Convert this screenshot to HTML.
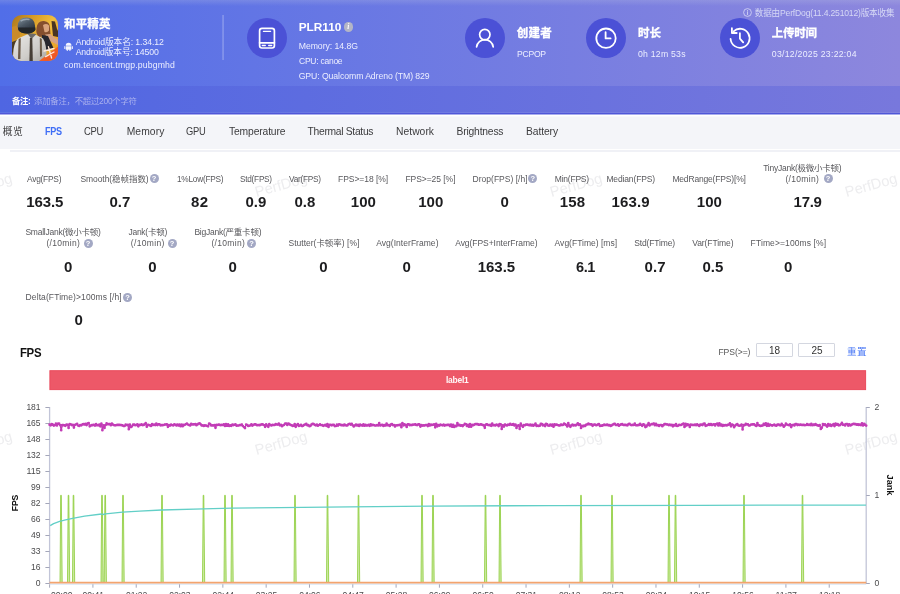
<!DOCTYPE html>
<html lang="zh-CN">
<head>
<meta charset="utf-8">
<title>PerfDog - 和平精英 FPS</title>
<meta name="viewport" content="width=900">
<style>
*{box-sizing:border-box;margin:0;padding:0}
html,body{width:900px;height:594px;overflow:hidden;background:#fff}
.hdr,.note,.tabs,.panel{will-change:transform}
body{font-family:"Liberation Sans", "Noto Sans CJK SC", sans-serif;position:relative;-webkit-font-smoothing:antialiased}
ul{list-style:none}
.t{position:absolute;white-space:nowrap;display:block}
.hb{-webkit-text-stroke:.3px #fff}
.abs{position:absolute;display:block}
.hdr{position:absolute;left:0;top:0;width:900px;height:86.4px;background:linear-gradient(90deg,#516ee8 0%,#8d87dd 100%)}
.hdr:before{content:"";position:absolute;left:0;top:0;width:900px;height:6px;background:linear-gradient(180deg,rgba(190,196,226,.24),rgba(190,196,226,0))}
.appicon{position:absolute;left:11.7px;top:14.7px;width:46px;height:46px}
.appicon svg{display:block}
.vsep{position:absolute;left:222px;top:15px;width:2px;height:45px;background:linear-gradient(90deg,rgba(255,255,255,.08),rgba(255,255,255,.28) 50%,rgba(255,255,255,.14))}
.circ{position:absolute;width:40px;height:40px;border-radius:50%;background:#4b51d6}
.circ svg{display:block}
.info{position:absolute;left:343.8px;top:22.4px;width:9.2px;height:9.2px;border-radius:50%;background:#b3b5c6}
.note{position:absolute;left:0;top:86px;width:900px;height:29px;background:linear-gradient(90deg,#4f66e2 0%,#7878dc 100%)}
.note:after{content:"";position:absolute;left:0;top:26px;width:900px;height:3px;background:linear-gradient(180deg,rgba(255,255,255,.08) 0,rgba(255,255,255,.08) 1px,#4f57d8 1px,#4f57d8 2px,#a9adec 2px,#a9adec 3px)}
.tabs{position:absolute;left:0;top:115px;width:900px;height:33.7px;background:linear-gradient(180deg,#fff 0,#fff 1px,#f9f9fc 1px,#f9f9fc 2px,#f4f5f9 2px);border-top:0 solid #fff;padding-top:2px}
.panel{position:absolute;left:0;top:150px;width:900px;height:444px;background:#fff;overflow:hidden}
.panel:before{content:"";position:absolute;left:9.5px;top:0.2px;width:891px;height:1.5px;background:#f0f1f6}
.q{position:absolute;width:9px;height:9px;border-radius:50%;background:#a3a8c4;display:block}
.inp{position:absolute;display:block;width:37.4px;height:14.4px;border:1px solid #d4d7e0;border-radius:1px;background:#fff}
.lbar{position:absolute;left:49.5px;top:220.2px;width:816.6px;height:20px}
.wm{position:absolute;width:80px;text-align:center;font-size:14.6px;line-height:20px;color:#ededef;transform:rotate(-15.5deg);white-space:nowrap}
</style>
</head>
<body>
<header class="hdr">
<div class="appicon"><svg viewBox="0 0 46 46" width="46" height="46">
<defs>
<linearGradient id="sky" x1="0" y1="0" x2="1" y2=".6"><stop offset="0" stop-color="#a8761f"/><stop offset=".35" stop-color="#d79a26"/><stop offset=".7" stop-color="#f0bd3c"/><stop offset="1" stop-color="#eaa52c"/></linearGradient>
<linearGradient id="shirt" x1="0" y1="0" x2="1" y2="1"><stop offset="0" stop-color="#e9e8e6"/><stop offset=".6" stop-color="#cfcdca"/><stop offset="1" stop-color="#a9a6a2"/></linearGradient>
<linearGradient id="helm" x1="0" y1="0" x2=".6" y2="1"><stop offset="0" stop-color="#8795a1"/><stop offset=".5" stop-color="#4a5662"/><stop offset="1" stop-color="#262c34"/></linearGradient>
<linearGradient id="cor" x1="0" y1="0" x2="1" y2="1"><stop offset="0" stop-color="#f47a2a"/><stop offset="1" stop-color="#ee4a26"/></linearGradient>
<clipPath id="ic"><rect width="46" height="46" rx="9.6" ry="9.6"/></clipPath>
<filter id="sf" x="-5%" y="-5%" width="110%" height="110%"><feGaussianBlur stdDeviation=".55"/></filter>
</defs>
<g clip-path="url(#ic)">
<rect width="46" height="46" fill="url(#sky)"/>
<g filter="url(#sf)">
<path d="M0 12 L7 10 L8 22 L0 26Z" fill="#c98a2a"/>
<path d="M0 27 L5 25 L6 46 L0 46Z" fill="#4b3b26"/>
<path d="M39.5 6 L43 6.5 L45 14 L46 16 L46 22 L41 21Z" fill="#4a3524"/>
<path d="M24.5 13 Q25.5 5.5 32 6 Q38 6.5 38 13 L38.5 19 L34 21 L27 22 Q23.5 19 24.5 13Z" fill="#85502f"/>
<path d="M31 10 Q34.5 8 37 10.5 L37 15.5 Q35.5 18 32.5 17Z" fill="#d9a47e"/>
<path d="M33 19.5 L38 19 L46 25 L46 30 L38 26Z" fill="#d6a283"/>
<path d="M30 20 L36 21 L41.5 33 L34 36 L29 28Z" fill="#27272d"/>
<path d="M1 46 Q0.5 27 7 23 L15 19.5 L24 20 L31 23.5 Q35 29 34.5 46Z" fill="url(#shirt)"/>
<path d="M15 18 L19.5 24 L24.5 19Z" fill="#6d6b68"/>
<path d="M17.9 23 L20.3 23 L20.8 46 L17.4 46Z" fill="#453c34"/>
<path d="M6.6 24 L8.8 23 L8.4 44 L6 44Z" fill="#6b5a48"/>
<path d="M27.8 22.8 L29.8 24 L30 41 L28 42Z" fill="#6b5a48"/>
<path d="M5.6 11.5 Q6 2.4 14.5 2.4 Q22.4 2.4 23 10.5 L23.4 14.5 Q21.5 18.6 15 18.6 Q8.5 18.6 6.4 15Z" fill="url(#helm)"/>
<path d="M6 12.5 L23.2 12.5 L23.4 15 Q21 18.4 15 18.4 Q8.6 18.4 6.4 15Z" fill="#20252c"/>
<path d="M8.6 6 Q12.5 3.6 17.5 4.6" stroke="#a9b6bf" stroke-width="1.5" fill="none" opacity=".75"/>
<path d="M46 31.5 L46 46 L27 46Z" fill="url(#cor)"/>
<path d="M32 36 L42 33.5 M36.4 31.6 L39.6 43 M33.6 41.6 L42 37" stroke="#ffe9da" stroke-width="1.3" stroke-linecap="round"/>
</g>
</g></svg></div>
<span class="t hb" id="t1" style="left:64.00px;top:16.37px;font-size:11.5px;line-height:16.1px;font-weight:700;color:#ffffff;letter-spacing:0.167px;">和平精英</span>
<svg class="abs" style="left:63.8px;top:42.2px" width="9.2" height="9.2" viewBox="0 0 9 9"><path d="M1.7 3.6 A2.8 2.8 0 0 1 7.3 3.6Z M1.7 4.1 H7.3 V7.2 Q7.3 7.7 6.8 7.7 H6.3 V8.6 Q6.3 9 5.8 9 Q5.3 9 5.3 8.6 V7.7 H3.7 V8.6 Q3.7 9 3.2 9 Q2.7 9 2.7 8.6 V7.7 H2.2 Q1.7 7.7 1.7 7.2Z M0.3 4.3 Q0.3 3.9 0.75 3.9 Q1.2 3.9 1.2 4.3 V6.5 Q1.2 6.9 0.75 6.9 Q0.3 6.9 0.3 6.5Z M7.8 4.3 Q7.8 3.9 8.25 3.9 Q8.7 3.9 8.7 4.3 V6.5 Q8.7 6.9 8.25 6.9 Q7.8 6.9 7.8 6.5Z" fill="#f2f3fd"/></svg>
<span class="t" id="t2" style="left:75.70px;top:36.10px;font-size:8.7px;line-height:12.18px;color:#eceeff;letter-spacing:-0.096px;">Android版本名: 1.34.12</span>
<span class="t" id="t3" style="left:75.70px;top:46.10px;font-size:8.7px;line-height:12.18px;color:#eceeff;letter-spacing:-0.119px;">Android版本号: 14500</span>
<span class="t" id="t4" style="left:64.00px;top:59.20px;font-size:8.7px;line-height:12.18px;color:#eceeff;letter-spacing:0.135px;">com.tencent.tmgp.pubgmhd</span>
<div class="vsep"></div>
<div class="circ" style="left:246.7px;top:17.5px"><svg width="40" height="40" viewBox="0 0 40 40" fill="none" stroke="#fff" stroke-width="1.7" stroke-linecap="round" stroke-linejoin="round"><rect x="12.6" y="10.4" width="14.8" height="19.6" rx="2.4"/><path d="M12.6 24.8 H27.4"/><path d="M16.4 13.3 H23.6" stroke-width="1.3"/><path d="M15.3 27.5 H18.3 M21.7 27.5 H24.7" stroke-width="1.3"/></svg></div>
<span class="t" id="t5" style="left:298.70px;top:18.95px;font-size:11.8px;line-height:16.52px;font-weight:700;color:#ffffff;letter-spacing:-0.008px;">PLR110</span>
<div class="info"><span class="t" style="left:0;top:0;width:9px;text-align:center;font-size:7.5px;line-height:9.4px;font-style:italic;font-weight:700;color:#fff;font-family:'Liberation Serif',serif">i</span></div>
<span class="t" id="t6" style="left:298.70px;top:40.10px;font-size:8.7px;line-height:12.18px;color:#eceeff;letter-spacing:-0.048px;">Memory: 14.8G</span>
<span class="t" id="t7" style="left:298.70px;top:55.10px;font-size:8.7px;line-height:12.18px;color:#eceeff;letter-spacing:-0.261px;transform:scaleX(0.9799);transform-origin:0 50%;">CPU: canoe</span>
<span class="t" id="t8" style="left:298.70px;top:70.10px;font-size:8.7px;line-height:12.18px;color:#eceeff;letter-spacing:-0.081px;">GPU: Qualcomm Adreno (TM) 829</span>
<div class="circ" style="left:465.2px;top:17.5px"><svg width="40" height="40" viewBox="0 0 40 40" fill="none" stroke="#fff" stroke-width="1.7" stroke-linecap="round" stroke-linejoin="round"><circle cx="19.8" cy="16.6" r="5.2"/><path d="M11.6 28.8 A8.4 8.4 0 0 1 28.2 28.8"/></svg></div>
<span class="t hb" id="t9" style="left:516.80px;top:25.27px;font-size:11.5px;line-height:16.1px;font-weight:700;color:#ffffff;letter-spacing:0.200px;">创建者</span>
<span class="t" id="t10" style="left:516.80px;top:47.50px;font-size:8.7px;line-height:12.18px;color:#eceeff;letter-spacing:-0.261px;transform:scaleX(0.9905);transform-origin:0 50%;">PCPOP</span>
<div class="circ" style="left:585.8px;top:17.5px"><svg width="40" height="40" viewBox="0 0 40 40" fill="none" stroke="#fff" stroke-width="1.7" stroke-linecap="round" stroke-linejoin="round"><circle cx="20" cy="20.2" r="9.7" stroke-width="1.8"/><path d="M19.6 14.2 V20.4 H24.6" stroke-width="1.8"/></svg></div>
<span class="t hb" id="t11" style="left:638.00px;top:25.27px;font-size:11.5px;line-height:16.1px;font-weight:700;color:#ffffff;letter-spacing:0.100px;">时长</span>
<span class="t" id="t12" style="left:638.00px;top:47.50px;font-size:8.7px;line-height:12.18px;color:#eceeff;letter-spacing:0.233px;">0h 12m 53s</span>
<div class="circ" style="left:720px;top:17.5px"><svg width="40" height="40" viewBox="0 0 40 40" fill="none" stroke="#fff" stroke-width="1.7" stroke-linecap="round" stroke-linejoin="round"><path d="M10.6 21 A9.5 9.5 0 1 0 13.6 13.3" stroke-width="1.8"/><path d="M11.9 10.2 V15 H16.7" stroke-width="1.8"/><path d="M19.9 15.2 V20.6 L23.2 24.4" stroke-width="1.8"/></svg></div>
<span class="t hb" id="t13" style="left:771.80px;top:25.27px;font-size:11.5px;line-height:16.1px;font-weight:700;color:#ffffff;letter-spacing:-0.233px;">上传时间</span>
<span class="t" id="t14" style="left:771.80px;top:47.50px;font-size:8.7px;line-height:12.18px;color:#eceeff;letter-spacing:0.277px;">03/12/2025 23:22:04</span>
<svg class="abs" style="left:742.6px;top:7.6px" width="9" height="9" viewBox="0 0 9 9" fill="none" stroke="#d9dbf6" stroke-width=".8"><circle cx="4.5" cy="4.5" r="3.9"/><path d="M4.5 4 V6.6 M4.5 2.5 V3" stroke-linecap="round"/></svg>
<span class="t" id="t15" style="left:754.80px;top:6.50px;font-size:8.6px;line-height:12.04px;color:#d6d8f5;letter-spacing:-0.187px;">数据由PerfDog(11.4.251012)版本收集</span>
</header>
<div class="note">
<span class="t" id="t16" style="left:11.60px;top:10.01px;font-size:8.4px;line-height:11.76px;font-weight:700;color:#ffffff;letter-spacing:-0.252px;transform:scaleX(0.9925);transform-origin:0 50%;">备注:</span>
<span class="t" id="t17" style="left:34.00px;top:10.01px;font-size:8.4px;line-height:11.76px;color:#a9b0ee;letter-spacing:-0.239px;">添加备注，不超过200个字符</span>
</div>
<nav class="tabs"><ul>
<li><span class="t" id="t18" style="left:2.80px;top:10.34px;font-size:9.8px;line-height:13.72px;color:#3c3c3e;letter-spacing:0.306px;">概览</span></li>
<li><span class="t on" id="t19" style="left:45.20px;top:10.22px;font-size:10.3px;line-height:14.42px;font-weight:700;color:#3f6ef6;letter-spacing:-0.309px;transform:scaleX(0.8808);transform-origin:0 50%;">FPS</span></li>
<li><span class="t" id="t20" style="left:84.40px;top:10.22px;font-size:10.3px;line-height:14.42px;color:#3c3c3e;letter-spacing:-0.309px;transform:scaleX(0.9180);transform-origin:0 50%;">CPU</span></li>
<li><span class="t" id="t21" style="left:126.70px;top:10.22px;font-size:10.3px;line-height:14.42px;color:#3c3c3e;letter-spacing:0.083px;">Memory</span></li>
<li><span class="t" id="t22" style="left:186.40px;top:10.22px;font-size:10.3px;line-height:14.42px;color:#3c3c3e;letter-spacing:-0.309px;transform:scaleX(0.9074);transform-origin:0 50%;">GPU</span></li>
<li><span class="t" id="t23" style="left:229.00px;top:10.22px;font-size:10.3px;line-height:14.42px;color:#3c3c3e;letter-spacing:-0.131px;">Temperature</span></li>
<li><span class="t" id="t24" style="left:307.60px;top:10.22px;font-size:10.3px;line-height:14.42px;color:#3c3c3e;letter-spacing:-0.302px;">Thermal Status</span></li>
<li><span class="t" id="t25" style="left:396.00px;top:10.22px;font-size:10.3px;line-height:14.42px;color:#3c3c3e;letter-spacing:0.039px;">Network</span></li>
<li><span class="t" id="t26" style="left:456.60px;top:10.22px;font-size:10.3px;line-height:14.42px;color:#3c3c3e;letter-spacing:-0.195px;">Brightness</span></li>
<li><span class="t" id="t27" style="left:526.00px;top:10.22px;font-size:10.3px;line-height:14.42px;color:#3c3c3e;letter-spacing:-0.087px;">Battery</span></li>
</ul></nav>
<main class="panel">
<div class="wms"><span class="wm" style="left:-54px;top:25.4px">PerfDog</span><span class="wm" style="left:241px;top:25.4px">PerfDog</span><span class="wm" style="left:536px;top:25.4px">PerfDog</span><span class="wm" style="left:831px;top:25.4px">PerfDog</span><span class="wm" style="left:-54px;top:283.4px">PerfDog</span><span class="wm" style="left:241px;top:283.4px">PerfDog</span><span class="wm" style="left:536px;top:283.4px">PerfDog</span><span class="wm" style="left:831px;top:283.4px">PerfDog</span></div>
<section class="stats">
<div class="stat"><span class="t" id="t28" style="left:27.20px;top:23.50px;font-size:8.5px;line-height:11.9px;color:#58585c;letter-spacing:-0.255px;transform:scaleX(0.9885);transform-origin:0 50%;">Avg(FPS)</span><span class="t v" id="t29" style="left:26.20px;top:41.20px;font-size:15px;line-height:21.0px;font-weight:700;color:#1d1d1f;letter-spacing:-0.087px;">163.5</span></div>
<div class="stat"><span class="t" id="t30" style="left:80.40px;top:23.50px;font-size:8.5px;line-height:11.9px;color:#58585c;letter-spacing:-0.061px;">Smooth(稳帧指数)</span><span class="q" style="left:149.6px;top:24.4px"><span class="t" style="left:0;top:0;width:9px;text-align:center;font-size:7.5px;line-height:9.6px;font-weight:700;color:#fff">?</span></span><span class="t v" id="t31" style="left:109.40px;top:41.20px;font-size:15px;line-height:21.0px;font-weight:700;color:#1d1d1f;letter-spacing:0.020px;">0.7</span></div>
<div class="stat"><span class="t" id="t32" style="left:176.60px;top:23.50px;font-size:8.5px;line-height:11.9px;color:#58585c;letter-spacing:-0.255px;transform:scaleX(0.9731);transform-origin:0 50%;">1%Low(FPS)</span><span class="t v" id="t33" style="left:191.00px;top:41.20px;font-size:15px;line-height:21.0px;font-weight:700;color:#1d1d1f;letter-spacing:0.412px;">82</span></div>
<div class="stat"><span class="t" id="t34" style="left:240.00px;top:23.50px;font-size:8.5px;line-height:11.9px;color:#58585c;letter-spacing:-0.255px;transform:scaleX(0.9678);transform-origin:0 50%;">Std(FPS)</span><span class="t v" id="t35" style="left:245.40px;top:41.20px;font-size:15px;line-height:21.0px;font-weight:700;color:#1d1d1f;letter-spacing:0.020px;">0.9</span></div>
<div class="stat"><span class="t" id="t36" style="left:289.00px;top:23.50px;font-size:8.5px;line-height:11.9px;color:#58585c;letter-spacing:-0.255px;transform:scaleX(0.9724);transform-origin:0 50%;">Var(FPS)</span><span class="t v" id="t37" style="left:294.40px;top:41.20px;font-size:15px;line-height:21.0px;font-weight:700;color:#1d1d1f;letter-spacing:0.020px;">0.8</span></div>
<div class="stat"><span class="t" id="t38" style="left:338.00px;top:23.50px;font-size:8.5px;line-height:11.9px;color:#58585c;letter-spacing:-0.046px;">FPS&gt;=18 [%]</span><span class="t v" id="t39" style="left:350.80px;top:41.20px;font-size:15px;line-height:21.0px;font-weight:700;color:#1d1d1f;letter-spacing:0.034px;">100</span></div>
<div class="stat"><span class="t" id="t40" style="left:405.40px;top:23.50px;font-size:8.5px;line-height:11.9px;color:#58585c;letter-spacing:-0.046px;">FPS&gt;=25 [%]</span><span class="t v" id="t41" style="left:418.20px;top:41.20px;font-size:15px;line-height:21.0px;font-weight:700;color:#1d1d1f;letter-spacing:0.034px;">100</span></div>
<div class="stat"><span class="t" id="t42" style="left:472.60px;top:23.50px;font-size:8.5px;line-height:11.9px;color:#58585c;letter-spacing:0.008px;">Drop(FPS) [/h]</span><span class="q" style="left:528.4px;top:24.4px"><span class="t" style="left:0;top:0;width:9px;text-align:center;font-size:7.5px;line-height:9.6px;font-weight:700;color:#fff">?</span></span><span class="t v" id="t43" style="left:500.60px;top:41.20px;font-size:15px;line-height:21.0px;font-weight:700;color:#1d1d1f;">0</span></div>
<div class="stat"><span class="t" id="t44" style="left:554.80px;top:23.50px;font-size:8.5px;line-height:11.9px;color:#58585c;letter-spacing:-0.227px;">Min(FPS)</span><span class="t v" id="t45" style="left:559.80px;top:41.20px;font-size:15px;line-height:21.0px;font-weight:700;color:#1d1d1f;letter-spacing:0.134px;">158</span></div>
<div class="stat"><span class="t" id="t46" style="left:606.40px;top:23.50px;font-size:8.5px;line-height:11.9px;color:#58585c;letter-spacing:-0.138px;">Median(FPS)</span><span class="t v" id="t47" style="left:611.60px;top:41.20px;font-size:15px;line-height:21.0px;font-weight:700;color:#1d1d1f;letter-spacing:0.138px;">163.9</span></div>
<div class="stat"><span class="t" id="t48" style="left:672.40px;top:23.50px;font-size:8.5px;line-height:11.9px;color:#58585c;letter-spacing:-0.171px;">MedRange(FPS)[%]</span><span class="t v" id="t49" style="left:696.80px;top:41.20px;font-size:15px;line-height:21.0px;font-weight:700;color:#1d1d1f;letter-spacing:0.034px;">100</span></div>
<div class="stat"><span class="t" id="t50" style="left:763.20px;top:12.90px;font-size:8.5px;line-height:11.9px;color:#58585c;letter-spacing:-0.240px;">TinyJank(极微小卡顿)</span><span class="t" id="t51" style="left:785.40px;top:23.50px;font-size:8.5px;line-height:11.9px;color:#58585c;letter-spacing:0.330px;">(/10min)</span><span class="q" style="left:823.6px;top:24.4px"><span class="t" style="left:0;top:0;width:9px;text-align:center;font-size:7.5px;line-height:9.6px;font-weight:700;color:#fff">?</span></span><span class="t v" id="t52" style="left:793.60px;top:41.20px;font-size:15px;line-height:21.0px;font-weight:700;color:#1d1d1f;letter-spacing:-0.301px;">17.9</span></div>
<div class="stat"><span class="t" id="t53" style="left:25.40px;top:77.30px;font-size:8.5px;line-height:11.9px;color:#58585c;letter-spacing:-0.241px;">SmallJank(微小卡顿)</span><span class="t" id="t54" style="left:46.40px;top:87.70px;font-size:8.5px;line-height:11.9px;color:#58585c;letter-spacing:0.330px;">(/10min)</span><span class="q" style="left:83.6px;top:88.6px"><span class="t" style="left:0;top:0;width:9px;text-align:center;font-size:7.5px;line-height:9.6px;font-weight:700;color:#fff">?</span></span><span class="t v" id="t55" style="left:64.00px;top:105.70px;font-size:15px;line-height:21.0px;font-weight:700;color:#1d1d1f;">0</span></div>
<div class="stat"><span class="t" id="t56" style="left:128.40px;top:77.30px;font-size:8.5px;line-height:11.9px;color:#58585c;letter-spacing:-0.246px;">Jank(卡顿)</span><span class="t" id="t57" style="left:130.80px;top:87.70px;font-size:8.5px;line-height:11.9px;color:#58585c;letter-spacing:0.330px;">(/10min)</span><span class="q" style="left:167.6px;top:88.6px"><span class="t" style="left:0;top:0;width:9px;text-align:center;font-size:7.5px;line-height:9.6px;font-weight:700;color:#fff">?</span></span><span class="t v" id="t58" style="left:148.20px;top:105.70px;font-size:15px;line-height:21.0px;font-weight:700;color:#1d1d1f;">0</span></div>
<div class="stat"><span class="t" id="t59" style="left:194.40px;top:77.30px;font-size:8.5px;line-height:11.9px;color:#58585c;letter-spacing:-0.234px;">BigJank(严重卡顿)</span><span class="t" id="t60" style="left:211.40px;top:87.70px;font-size:8.5px;line-height:11.9px;color:#58585c;letter-spacing:0.330px;">(/10min)</span><span class="q" style="left:247.0px;top:88.6px"><span class="t" style="left:0;top:0;width:9px;text-align:center;font-size:7.5px;line-height:9.6px;font-weight:700;color:#fff">?</span></span><span class="t v" id="t61" style="left:228.60px;top:105.70px;font-size:15px;line-height:21.0px;font-weight:700;color:#1d1d1f;">0</span></div>
<div class="stat"><span class="t" id="t62" style="left:288.60px;top:87.70px;font-size:8.5px;line-height:11.9px;color:#58585c;letter-spacing:-0.010px;">Stutter(卡顿率) [%]</span><span class="t v" id="t63" style="left:319.20px;top:105.70px;font-size:15px;line-height:21.0px;font-weight:700;color:#1d1d1f;">0</span></div>
<div class="stat"><span class="t" id="t64" style="left:376.20px;top:87.70px;font-size:8.5px;line-height:11.9px;color:#58585c;letter-spacing:0.040px;">Avg(InterFrame)</span><span class="t v" id="t65" style="left:402.60px;top:105.70px;font-size:15px;line-height:21.0px;font-weight:700;color:#1d1d1f;">0</span></div>
<div class="stat"><span class="t" id="t66" style="left:455.20px;top:87.70px;font-size:8.5px;line-height:11.9px;color:#58585c;letter-spacing:-0.051px;">Avg(FPS+InterFrame)</span><span class="t v" id="t67" style="left:477.80px;top:105.70px;font-size:15px;line-height:21.0px;font-weight:700;color:#1d1d1f;letter-spacing:-0.062px;">163.5</span></div>
<div class="stat"><span class="t" id="t68" style="left:554.60px;top:87.70px;font-size:8.5px;line-height:11.9px;color:#58585c;letter-spacing:0.011px;">Avg(FTime) [ms]</span><span class="t v" id="t69" style="left:575.60px;top:105.70px;font-size:15px;line-height:21.0px;font-weight:700;color:#1d1d1f;letter-spacing:-0.450px;transform:scaleX(0.9670);transform-origin:0 50%;">6.1</span></div>
<div class="stat"><span class="t" id="t70" style="left:634.20px;top:87.70px;font-size:8.5px;line-height:11.9px;color:#58585c;letter-spacing:-0.143px;">Std(FTime)</span><span class="t v" id="t71" style="left:644.60px;top:105.70px;font-size:15px;line-height:21.0px;font-weight:700;color:#1d1d1f;letter-spacing:0.020px;">0.7</span></div>
<div class="stat"><span class="t" id="t72" style="left:692.20px;top:87.70px;font-size:8.5px;line-height:11.9px;color:#58585c;letter-spacing:-0.081px;">Var(FTime)</span><span class="t v" id="t73" style="left:702.40px;top:105.70px;font-size:15px;line-height:21.0px;font-weight:700;color:#1d1d1f;letter-spacing:0.020px;">0.5</span></div>
<div class="stat"><span class="t" id="t74" style="left:750.60px;top:87.70px;font-size:8.5px;line-height:11.9px;color:#58585c;letter-spacing:0.109px;">FTime&gt;=100ms [%]</span><span class="t v" id="t75" style="left:784.00px;top:105.70px;font-size:15px;line-height:21.0px;font-weight:700;color:#1d1d1f;">0</span></div>
<div class="stat"><span class="t" id="t76" style="left:25.60px;top:141.50px;font-size:8.5px;line-height:11.9px;color:#58585c;letter-spacing:0.099px;">Delta(FTime)&gt;100ms [/h]</span><span class="q" style="left:123.0px;top:142.8px"><span class="t" style="left:0;top:0;width:9px;text-align:center;font-size:7.5px;line-height:9.6px;font-weight:700;color:#fff">?</span></span><span class="t v" id="t77" style="left:74.60px;top:159.00px;font-size:15px;line-height:21.0px;font-weight:700;color:#1d1d1f;">0</span></div>
</section>
<section class="chart">
<span class="t" id="t78" style="left:20.40px;top:195.22px;font-size:12.4px;line-height:17.36px;font-weight:700;color:#111;letter-spacing:-0.372px;transform:scaleX(0.9202);transform-origin:0 50%;">FPS</span>
<span class="t" id="t79" style="left:718.40px;top:196.40px;font-size:8.6px;line-height:12.04px;color:#555;letter-spacing:-0.064px;">FPS(&gt;=)</span>
<span class="inp" style="left:755.6px;top:193.0px"><span class="t" id="t80" style="left:0.00px;top:-10.46px;font-size:10px;line-height:14.0px;color:#333;left:0;top:0;width:36px;text-align:center;line-height:13px;">18</span></span>
<span class="inp" style="left:798px;top:193.0px"><span class="t" id="t81" style="left:0.00px;top:-10.46px;font-size:10px;line-height:14.0px;color:#333;left:0;top:0;width:36px;text-align:center;line-height:13px;">25</span></span>
<span class="t" id="t82" style="left:847.00px;top:195.15px;font-size:9.6px;line-height:13.44px;color:#4a78f5;letter-spacing:0.312px;">重置</span>
<svg class="abs plot" style="left:0;top:216px" width="900" height="228" viewBox="0 366 900 228">
<g font-family='"Liberation Sans", "Noto Sans CJK SC", sans-serif' font-size="9.8" fill="#4a4a4c">
<rect x="49.9" y="370.7" width="815.7" height="18.9" fill="#ed5868" stroke="#ea4b5d" stroke-width="1"/>
<path d="M49.6 407.1 V584.0 M866.2 407.1 V584.0" stroke="#c2c5d8" stroke-width="1.3" fill="none"/>
<path d="M49.6 584.1 H866.2" stroke="#cfe0f2" stroke-width="1" fill="none"/>
<text x="40.6" y="410.30" text-anchor="end" textLength="14.2" lengthAdjust="spacingAndGlyphs">181</text>
<text x="40.6" y="426.30" text-anchor="end" textLength="14.2" lengthAdjust="spacingAndGlyphs">165</text>
<text x="40.6" y="442.30" text-anchor="end" textLength="14.2" lengthAdjust="spacingAndGlyphs">148</text>
<text x="40.6" y="458.30" text-anchor="end" textLength="14.2" lengthAdjust="spacingAndGlyphs">132</text>
<text x="40.6" y="474.30" text-anchor="end" textLength="14.2" lengthAdjust="spacingAndGlyphs">115</text>
<text x="40.6" y="490.30" text-anchor="end" textLength="9.5" lengthAdjust="spacingAndGlyphs">99</text>
<text x="40.6" y="506.30" text-anchor="end" textLength="9.5" lengthAdjust="spacingAndGlyphs">82</text>
<text x="40.6" y="522.30" text-anchor="end" textLength="9.5" lengthAdjust="spacingAndGlyphs">66</text>
<text x="40.6" y="538.30" text-anchor="end" textLength="9.5" lengthAdjust="spacingAndGlyphs">49</text>
<text x="40.6" y="554.30" text-anchor="end" textLength="9.5" lengthAdjust="spacingAndGlyphs">33</text>
<text x="40.6" y="570.30" text-anchor="end" textLength="9.5" lengthAdjust="spacingAndGlyphs">16</text>
<text x="40.6" y="586.30" text-anchor="end" textLength="4.8" lengthAdjust="spacingAndGlyphs">0</text>
<text x="874.4" y="410.30" textLength="4.8" lengthAdjust="spacingAndGlyphs">2</text>
<text x="874.4" y="498.30" textLength="4.8" lengthAdjust="spacingAndGlyphs">1</text>
<text x="874.4" y="586.30" textLength="4.8" lengthAdjust="spacingAndGlyphs">0</text>
<text x="51.00" y="598.4" textLength="21.4" lengthAdjust="spacingAndGlyphs">00:00</text>
<text x="93.31" y="598.4" text-anchor="middle" textLength="21.4" lengthAdjust="spacingAndGlyphs">00:41</text>
<text x="136.63" y="598.4" text-anchor="middle" textLength="21.4" lengthAdjust="spacingAndGlyphs">01:22</text>
<text x="179.94" y="598.4" text-anchor="middle" textLength="21.4" lengthAdjust="spacingAndGlyphs">02:03</text>
<text x="223.25" y="598.4" text-anchor="middle" textLength="21.4" lengthAdjust="spacingAndGlyphs">02:44</text>
<text x="266.56" y="598.4" text-anchor="middle" textLength="21.4" lengthAdjust="spacingAndGlyphs">03:25</text>
<text x="309.88" y="598.4" text-anchor="middle" textLength="21.4" lengthAdjust="spacingAndGlyphs">04:06</text>
<text x="353.19" y="598.4" text-anchor="middle" textLength="21.4" lengthAdjust="spacingAndGlyphs">04:47</text>
<text x="396.50" y="598.4" text-anchor="middle" textLength="21.4" lengthAdjust="spacingAndGlyphs">05:28</text>
<text x="439.81" y="598.4" text-anchor="middle" textLength="21.4" lengthAdjust="spacingAndGlyphs">06:09</text>
<text x="483.13" y="598.4" text-anchor="middle" textLength="21.4" lengthAdjust="spacingAndGlyphs">06:50</text>
<text x="526.44" y="598.4" text-anchor="middle" textLength="21.4" lengthAdjust="spacingAndGlyphs">07:31</text>
<text x="569.75" y="598.4" text-anchor="middle" textLength="21.4" lengthAdjust="spacingAndGlyphs">08:12</text>
<text x="613.06" y="598.4" text-anchor="middle" textLength="21.4" lengthAdjust="spacingAndGlyphs">08:53</text>
<text x="656.38" y="598.4" text-anchor="middle" textLength="21.4" lengthAdjust="spacingAndGlyphs">09:34</text>
<text x="699.69" y="598.4" text-anchor="middle" textLength="21.4" lengthAdjust="spacingAndGlyphs">10:15</text>
<text x="743.00" y="598.4" text-anchor="middle" textLength="21.4" lengthAdjust="spacingAndGlyphs">10:56</text>
<text x="786.31" y="598.4" text-anchor="middle" textLength="21.4" lengthAdjust="spacingAndGlyphs">11:37</text>
<text x="829.63" y="598.4" text-anchor="middle" textLength="21.4" lengthAdjust="spacingAndGlyphs">12:18</text>
<path d="M45.4 407.50 H49.6 M45.4 423.50 H49.6 M45.4 439.50 H49.6 M45.4 455.50 H49.6 M45.4 471.50 H49.6 M45.4 487.50 H49.6 M45.4 503.50 H49.6 M45.4 519.50 H49.6 M45.4 535.50 H49.6 M45.4 551.50 H49.6 M45.4 567.50 H49.6 M45.4 583.50 H49.6 M866.2 407.50 H869.8000000000001 M866.2 495.50 H869.8000000000001 M866.2 583.50 H869.8000000000001 M49.60 584.3 V587.7 M92.91 584.3 V587.7 M136.23 584.3 V587.7 M179.54 584.3 V587.7 M222.85 584.3 V587.7 M266.16 584.3 V587.7 M309.48 584.3 V587.7 M352.79 584.3 V587.7 M396.10 584.3 V587.7 M439.41 584.3 V587.7 M482.73 584.3 V587.7 M526.04 584.3 V587.7 M569.35 584.3 V587.7 M612.66 584.3 V587.7 M655.98 584.3 V587.7 M699.29 584.3 V587.7 M742.60 584.3 V587.7 M785.91 584.3 V587.7 M829.23 584.3 V587.7 " stroke="#a4a7ba" stroke-width="1" fill="none"/>
</g>
<path d="M60.0 582.7 L60.70 495.3 L61.30 495.3 L62.2 582.7 M67.5 582.7 L68.20 495.3 L68.80 495.3 L69.7 582.7 M72.5 582.7 L73.20 495.3 L73.80 495.3 L74.7 582.7 M101.0 582.7 L101.70 495.3 L102.30 495.3 L103.2 582.7 M104.2 582.7 L104.90 495.3 L105.50 495.3 L106.4 582.7 M122.0 582.7 L122.70 495.3 L123.30 495.3 L124.2 582.7 M161.0 582.7 L161.70 495.3 L162.30 495.3 L163.2 582.7 M202.5 582.7 L203.20 495.3 L203.80 495.3 L204.7 582.7 M224.0 582.7 L224.70 495.3 L225.30 495.3 L226.2 582.7 M231.0 582.7 L231.70 495.3 L232.30 495.3 L233.2 582.7 M294.0 582.7 L294.70 495.3 L295.30 495.3 L296.2 582.7 M326.5 582.7 L327.20 495.3 L327.80 495.3 L328.7 582.7 M357.5 582.7 L358.20 495.3 L358.80 495.3 L359.7 582.7 M421.0 582.7 L421.70 495.3 L422.30 495.3 L423.2 582.7 M432.0 582.7 L432.70 495.3 L433.30 495.3 L434.2 582.7 M484.5 582.7 L485.20 495.3 L485.80 495.3 L486.7 582.7 M499.0 582.7 L499.70 495.3 L500.30 495.3 L501.2 582.7 M580.0 582.7 L580.70 495.3 L581.30 495.3 L582.2 582.7 M611.0 582.7 L611.70 495.3 L612.30 495.3 L613.2 582.7 M668.0 582.7 L668.70 495.3 L669.30 495.3 L670.2 582.7 M674.5 582.7 L675.20 495.3 L675.80 495.3 L676.7 582.7 M743.0 582.7 L743.70 495.3 L744.30 495.3 L745.2 582.7 M801.5 582.7 L802.20 495.3 L802.80 495.3 L803.7 582.7 " fill="#a5d85a" fill-opacity=".55" stroke="#8acb36" stroke-width=".8" stroke-linejoin="round"/>
<polyline points="50.2,525.60 53.6,523.60 59.6,521.30 65.6,519.80 72.6,518.40 84.6,516.20 101.6,514.00 103.1,514.50 105.6,513.90 122.6,512.20 139.6,511.10 161.6,510.00 203.6,508.80 231.6,508.10 279.6,507.60 349.6,506.80 429.6,506.10 549.6,505.60 699.6,505.30 866.0,505.10" fill="none" stroke="#62cfc7" stroke-width="1.3" stroke-linejoin="round"/>
<path d="M49.6 582.7 H866.2" stroke="#f3a46e" stroke-width="1.7" fill="none"/>
<polyline points="49.6,424.7 50.7,425.3 51.7,424.2 52.8,424.7 53.8,425.6 54.9,425.1 55.9,423.7 57.0,425.5 58.1,423.7 59.1,423.6 60.2,425.1 61.2,430.2 62.3,425.1 63.3,425.2 64.4,425.3 65.4,425.8 66.5,424.7 67.6,424.8 68.6,428.0 69.7,424.2 70.7,424.3 71.8,425.1 72.8,424.9 73.9,427.6 75.0,424.8 76.0,424.3 77.1,423.8 78.1,425.5 79.2,425.9 80.2,425.2 81.3,425.3 82.3,424.5 83.4,424.2 84.5,424.5 85.5,423.9 86.6,425.1 87.6,423.5 88.7,423.1 89.7,426.3 90.8,425.6 91.9,425.1 92.9,425.1 94.0,424.9 95.0,425.6 96.1,424.0 97.1,425.2 98.2,425.3 99.3,424.5 100.3,426.3 101.4,423.7 102.4,430.2 103.5,425.4 104.5,428.0 105.6,425.0 106.6,423.3 107.7,424.2 108.8,424.1 109.8,424.2 110.9,425.2 111.9,423.5 113.0,424.6 114.0,425.1 115.1,425.3 116.2,425.1 117.2,424.9 118.3,424.9 119.3,424.8 120.4,425.0 121.4,425.2 122.5,425.3 123.5,425.9 124.6,425.9 125.7,424.6 126.7,424.9 127.8,424.8 128.8,429.2 129.9,424.5 130.9,427.1 132.0,426.3 133.1,424.7 134.1,424.6 135.2,425.2 136.2,425.0 137.3,424.3 138.3,426.3 139.4,424.8 140.5,424.9 141.5,424.4 142.6,425.1 143.6,424.9 144.7,424.3 145.7,423.2 146.8,426.7 147.8,424.8 148.9,425.0 150.0,425.4 151.0,426.0 152.1,424.1 153.1,425.0 154.2,424.6 155.2,425.1 156.3,423.7 157.4,425.1 158.4,424.3 159.5,424.3 160.5,425.3 161.6,425.1 162.6,425.2 163.7,425.0 164.7,424.5 165.8,424.5 166.9,424.3 167.9,426.8 169.0,425.1 170.0,425.6 171.1,424.6 172.1,425.0 173.2,425.4 174.3,424.4 175.3,424.6 176.4,425.5 177.4,424.5 178.5,425.5 179.5,424.5 180.6,426.2 181.7,424.7 182.7,426.2 183.8,424.9 184.8,424.8 185.9,424.0 186.9,423.7 188.0,424.5 189.0,424.9 190.1,425.5 191.2,423.8 192.2,424.4 193.3,424.3 194.3,424.3 195.4,424.1 196.4,425.2 197.5,424.4 198.6,423.5 199.6,423.3 200.7,424.3 201.7,425.5 202.8,425.4 203.8,425.9 204.9,425.4 205.9,425.5 207.0,425.8 208.1,426.3 209.1,423.6 210.2,424.2 211.2,425.4 212.3,425.3 213.3,425.5 214.4,425.1 215.5,427.8 216.5,424.8 217.6,425.0 218.6,424.6 219.7,424.9 220.7,425.2 221.8,424.8 222.9,425.0 223.9,424.3 225.0,426.0 226.0,424.2 227.1,425.7 228.1,424.4 229.2,425.9 230.2,425.3 231.3,425.8 232.4,424.5 233.4,425.1 234.5,424.7 235.5,424.4 236.6,425.7 237.6,425.5 238.7,425.5 239.8,425.0 240.8,425.1 241.9,424.5 242.9,426.0 244.0,427.1 245.0,428.1 246.1,424.5 247.1,424.8 248.2,425.9 249.3,425.7 250.3,425.3 251.4,424.3 252.4,425.6 253.5,424.8 254.5,424.4 255.6,424.3 256.7,425.1 257.7,425.1 258.8,425.1 259.8,425.2 260.9,424.6 261.9,424.4 263.0,424.5 264.0,425.0 265.1,426.8 266.2,424.4 267.2,425.5 268.3,426.8 269.3,424.1 270.4,425.0 271.4,425.5 272.5,424.9 273.6,425.0 274.6,424.9 275.7,424.1 276.7,424.4 277.8,424.6 278.8,423.5 279.9,425.3 281.0,424.9 282.0,426.2 283.1,425.3 284.1,424.8 285.2,423.6 286.2,423.5 287.3,424.9 288.3,423.6 289.4,424.1 290.5,424.9 291.5,425.1 292.6,426.0 293.6,425.7 294.7,424.1 295.7,426.8 296.8,424.9 297.9,424.0 298.9,426.0 300.0,425.4 301.0,424.8 302.1,426.1 303.1,425.7 304.2,424.8 305.2,424.4 306.3,423.8 307.4,425.3 308.4,425.1 309.5,426.2 310.5,425.8 311.6,424.4 312.6,423.9 313.7,424.1 314.8,424.8 315.8,425.3 316.9,424.6 317.9,425.7 319.0,425.0 320.0,424.4 321.1,425.1 322.2,425.1 323.2,425.8 324.3,425.3 325.3,424.8 326.4,425.8 327.4,424.2 328.5,427.0 329.5,424.9 330.6,424.8 331.7,425.3 332.7,424.9 333.8,424.9 334.8,426.1 335.9,426.0 336.9,424.7 338.0,425.6 339.1,424.3 340.1,424.5 341.2,425.2 342.2,425.0 343.3,425.4 344.3,424.7 345.4,425.2 346.4,425.5 347.5,425.3 348.6,424.0 349.6,423.8 350.7,424.6 351.7,423.8 352.8,425.3 353.8,426.5 354.9,425.4 356.0,424.6 357.0,425.4 358.1,424.8 359.1,425.9 360.2,424.6 361.2,425.2 362.3,425.6 363.4,424.4 364.4,425.7 365.5,424.9 366.5,425.5 367.6,425.3 368.6,424.9 369.7,425.8 370.7,424.3 371.8,425.3 372.9,424.8 373.9,425.1 375.0,425.5 376.0,425.5 377.1,425.0 378.1,425.5 379.2,423.2 380.3,425.5 381.3,425.1 382.4,424.9 383.4,426.0 384.5,425.1 385.5,425.5 386.6,423.6 387.6,425.2 388.7,425.2 389.8,426.0 390.8,424.5 391.9,424.0 392.9,425.1 394.0,425.1 395.0,426.5 396.1,425.3 397.2,425.3 398.2,425.1 399.3,425.1 400.3,424.5 401.4,427.2 402.4,423.1 403.5,425.3 404.6,424.4 405.6,425.0 406.7,427.0 407.7,424.3 408.8,424.4 409.8,425.2 410.9,424.9 411.9,425.1 413.0,424.7 414.1,424.5 415.1,424.4 416.2,424.9 417.2,425.1 418.3,424.4 419.3,424.4 420.4,426.6 421.5,425.0 422.5,425.6 423.6,425.3 424.6,425.5 425.7,425.0 426.7,425.1 427.8,426.1 428.8,424.0 429.9,425.5 431.0,424.6 432.0,424.9 433.1,424.7 434.1,424.4 435.2,427.3 436.2,423.8 437.3,426.3 438.4,425.1 439.4,425.6 440.5,424.7 441.5,425.0 442.6,425.3 443.6,424.7 444.7,425.6 445.8,425.0 446.8,425.1 447.9,424.9 448.9,424.8 450.0,426.1 451.0,424.6 452.1,426.7 453.1,424.8 454.2,426.9 455.3,425.8 456.3,426.2 457.4,423.1 458.4,425.2 459.5,424.9 460.5,425.7 461.6,425.4 462.7,426.1 463.7,425.0 464.8,423.9 465.8,424.1 466.9,425.9 467.9,424.9 469.0,426.7 470.0,424.0 471.1,426.7 472.2,424.9 473.2,425.2 474.3,424.7 475.3,424.1 476.4,424.1 477.4,424.2 478.5,424.7 479.6,424.6 480.6,424.3 481.7,424.6 482.7,424.9 483.8,425.4 484.8,427.8 485.9,424.6 487.0,424.4 488.0,424.9 489.1,425.2 490.1,424.9 491.2,425.8 492.2,423.6 493.3,425.2 494.3,425.2 495.4,425.5 496.5,424.6 497.5,424.8 498.6,426.1 499.6,424.1 500.7,424.3 501.7,429.0 502.8,425.3 503.9,426.6 504.9,424.5 506.0,425.1 507.0,425.5 508.1,424.7 509.1,424.8 510.2,423.9 511.2,424.6 512.3,424.7 513.4,424.2 514.4,425.5 515.5,424.7 516.5,428.0 517.6,425.6 518.6,425.3 519.7,428.9 520.8,423.7 521.8,425.5 522.9,426.8 523.9,425.0 525.0,425.2 526.0,424.7 527.1,424.5 528.2,424.9 529.2,425.2 530.3,424.7 531.3,425.4 532.4,424.8 533.4,425.7 534.5,424.8 535.5,423.7 536.6,425.9 537.7,425.6 538.7,426.0 539.8,425.7 540.8,423.8 541.9,424.2 542.9,425.4 544.0,424.9 545.1,426.1 546.1,423.8 547.2,424.4 548.2,425.6 549.3,425.6 550.3,424.6 551.4,425.6 552.4,424.5 553.5,426.7 554.6,424.4 555.6,424.9 556.7,424.5 557.7,425.0 558.8,425.4 559.8,425.5 560.9,424.7 562.0,424.9 563.0,424.8 564.1,423.7 565.1,424.2 566.2,424.9 567.2,426.4 568.3,423.0 569.4,425.6 570.4,426.8 571.5,425.3 572.5,424.7 573.6,425.5 574.6,425.2 575.7,425.4 576.7,424.6 577.8,423.3 578.9,424.9 579.9,424.3 581.0,428.0 582.0,425.8 583.1,426.3 584.1,425.5 585.2,426.0 586.3,424.5 587.3,424.4 588.4,423.6 589.4,424.2 590.5,424.4 591.5,424.4 592.6,425.8 593.6,424.8 594.7,424.5 595.8,425.1 596.8,425.1 597.9,424.4 598.9,424.0 600.0,425.9 601.0,425.5 602.1,425.7 603.2,425.2 604.2,424.7 605.3,425.0 606.3,424.9 607.4,424.6 608.4,425.3 609.5,425.2 610.6,425.9 611.6,425.4 612.7,424.7 613.7,424.0 614.8,423.8 615.8,424.9 616.9,425.0 617.9,424.3 619.0,425.7 620.1,424.8 621.1,424.4 622.2,424.2 623.2,424.8 624.3,424.9 625.3,424.8 626.4,425.2 627.5,425.3 628.5,424.1 629.6,423.9 630.6,424.8 631.7,425.1 632.7,424.9 633.8,424.8 634.8,423.7 635.9,425.2 637.0,425.3 638.0,425.2 639.1,424.9 640.1,423.8 641.2,424.8 642.2,425.8 643.3,424.3 644.4,424.8 645.4,427.1 646.5,426.4 647.5,424.8 648.6,423.2 649.6,425.4 650.7,424.5 651.8,424.1 652.8,424.1 653.9,423.5 654.9,425.2 656.0,423.8 657.0,425.3 658.1,425.1 659.1,425.9 660.2,425.0 661.3,425.0 662.3,426.2 663.4,425.2 664.4,424.2 665.5,424.1 666.5,424.3 667.6,424.5 668.7,425.1 669.7,424.7 670.8,425.2 671.8,424.8 672.9,426.3 673.9,425.2 675.0,425.4 676.0,424.0 677.1,425.9 678.2,425.6 679.2,424.8 680.3,425.0 681.3,424.8 682.4,424.2 683.4,423.5 684.5,427.0 685.6,423.8 686.6,425.4 687.7,424.4 688.7,424.8 689.8,426.9 690.8,424.5 691.9,425.0 692.9,424.9 694.0,425.0 695.1,424.5 696.1,425.2 697.2,424.4 698.2,425.1 699.3,426.0 700.3,424.7 701.4,424.7 702.5,425.1 703.5,423.9 704.6,423.7 705.6,425.8 706.7,425.4 707.7,425.0 708.8,424.2 709.9,424.9 710.9,424.0 712.0,425.1 713.0,424.5 714.1,424.4 715.1,425.5 716.2,424.0 717.2,423.7 718.3,425.4 719.4,423.4 720.4,425.3 721.5,424.5 722.5,426.0 723.6,425.2 724.6,425.4 725.7,425.2 726.8,425.4 727.8,424.9 728.9,424.6 729.9,423.4 731.0,426.3 732.0,424.5 733.1,425.1 734.1,427.2 735.2,425.6 736.3,424.6 737.3,424.1 738.4,425.5 739.4,425.7 740.5,425.5 741.5,424.5 742.6,429.4 743.7,425.1 744.7,425.1 745.8,423.8 746.8,424.4 747.9,424.3 748.9,425.5 750.0,425.3 751.1,424.5 752.1,424.5 753.2,424.4 754.2,424.4 755.3,425.3 756.3,425.9 757.4,423.0 758.4,425.0 759.5,425.6 760.6,426.0 761.6,425.7 762.7,425.5 763.7,423.9 764.8,424.8 765.8,423.4 766.9,425.8 768.0,423.9 769.0,425.7 770.1,424.7 771.1,425.1 772.2,425.6 773.2,425.0 774.3,424.6 775.3,425.4 776.4,425.7 777.5,424.6 778.5,424.5 779.6,425.2 780.6,425.3 781.7,423.9 782.7,425.2 783.8,426.7 784.9,425.5 785.9,423.7 787.0,424.5 788.0,424.8 789.1,425.2 790.1,424.4 791.2,427.1 792.3,425.1 793.3,424.9 794.4,425.5 795.4,424.2 796.5,424.1 797.5,425.1 798.6,424.7 799.6,425.0 800.7,424.5 801.8,425.0 802.8,424.9 803.9,424.9 804.9,425.2 806.0,425.0 807.0,424.2 808.1,425.0 809.2,424.5 810.2,425.1 811.3,423.9 812.3,425.2 813.4,424.5 814.4,424.9 815.5,424.1 816.5,424.9 817.6,425.4 818.7,425.7 819.7,425.2 820.8,429.0 821.8,427.7 822.9,424.0 823.9,425.1 825.0,424.4 826.1,425.4 827.1,426.6 828.2,424.1 829.2,425.5 830.3,424.6 831.3,425.9 832.4,425.0 833.5,424.1 834.5,426.1 835.6,423.7 836.6,424.7 837.7,424.1 838.7,425.3 839.8,425.2 840.8,424.3 841.9,422.9 843.0,424.8 844.0,424.6 845.1,425.4 846.1,424.1 847.2,424.0 848.2,425.6 849.3,424.3 850.4,425.4 851.4,424.9 852.5,424.2 853.5,423.8 854.6,424.1 855.6,424.2 856.7,424.7 857.7,424.4 858.8,424.9 859.9,424.6 860.9,425.1 862.0,423.3 863.0,425.5 864.1,423.8 865.1,424.7 866.2,425.6" fill="none" stroke="#c23cb6" stroke-width="1.4" stroke-linejoin="round"/>
<path d="M49.6 424.7h0M50.7 425.3h0M51.7 424.2h0M52.8 424.7h0M53.8 425.6h0M54.9 425.1h0M55.9 423.7h0M57.0 425.5h0M58.1 423.7h0M59.1 423.6h0M60.2 425.1h0M61.2 430.2h0M62.3 425.1h0M63.3 425.2h0M64.4 425.3h0M65.4 425.8h0M66.5 424.7h0M67.6 424.8h0M68.6 428.0h0M69.7 424.2h0M70.7 424.3h0M71.8 425.1h0M72.8 424.9h0M73.9 427.6h0M75.0 424.8h0M76.0 424.3h0M77.1 423.8h0M78.1 425.5h0M79.2 425.9h0M80.2 425.2h0M81.3 425.3h0M82.3 424.5h0M83.4 424.2h0M84.5 424.5h0M85.5 423.9h0M86.6 425.1h0M87.6 423.5h0M88.7 423.1h0M89.7 426.3h0M90.8 425.6h0M91.9 425.1h0M92.9 425.1h0M94.0 424.9h0M95.0 425.6h0M96.1 424.0h0M97.1 425.2h0M98.2 425.3h0M99.3 424.5h0M100.3 426.3h0M101.4 423.7h0M102.4 430.2h0M103.5 425.4h0M104.5 428.0h0M105.6 425.0h0M106.6 423.3h0M107.7 424.2h0M108.8 424.1h0M109.8 424.2h0M110.9 425.2h0M111.9 423.5h0M113.0 424.6h0M114.0 425.1h0M115.1 425.3h0M116.2 425.1h0M117.2 424.9h0M118.3 424.9h0M119.3 424.8h0M120.4 425.0h0M121.4 425.2h0M122.5 425.3h0M123.5 425.9h0M124.6 425.9h0M125.7 424.6h0M126.7 424.9h0M127.8 424.8h0M128.8 429.2h0M129.9 424.5h0M130.9 427.1h0M132.0 426.3h0M133.1 424.7h0M134.1 424.6h0M135.2 425.2h0M136.2 425.0h0M137.3 424.3h0M138.3 426.3h0M139.4 424.8h0M140.5 424.9h0M141.5 424.4h0M142.6 425.1h0M143.6 424.9h0M144.7 424.3h0M145.7 423.2h0M146.8 426.7h0M147.8 424.8h0M148.9 425.0h0M150.0 425.4h0M151.0 426.0h0M152.1 424.1h0M153.1 425.0h0M154.2 424.6h0M155.2 425.1h0M156.3 423.7h0M157.4 425.1h0M158.4 424.3h0M159.5 424.3h0M160.5 425.3h0M161.6 425.1h0M162.6 425.2h0M163.7 425.0h0M164.7 424.5h0M165.8 424.5h0M166.9 424.3h0M167.9 426.8h0M169.0 425.1h0M170.0 425.6h0M171.1 424.6h0M172.1 425.0h0M173.2 425.4h0M174.3 424.4h0M175.3 424.6h0M176.4 425.5h0M177.4 424.5h0M178.5 425.5h0M179.5 424.5h0M180.6 426.2h0M181.7 424.7h0M182.7 426.2h0M183.8 424.9h0M184.8 424.8h0M185.9 424.0h0M186.9 423.7h0M188.0 424.5h0M189.0 424.9h0M190.1 425.5h0M191.2 423.8h0M192.2 424.4h0M193.3 424.3h0M194.3 424.3h0M195.4 424.1h0M196.4 425.2h0M197.5 424.4h0M198.6 423.5h0M199.6 423.3h0M200.7 424.3h0M201.7 425.5h0M202.8 425.4h0M203.8 425.9h0M204.9 425.4h0M205.9 425.5h0M207.0 425.8h0M208.1 426.3h0M209.1 423.6h0M210.2 424.2h0M211.2 425.4h0M212.3 425.3h0M213.3 425.5h0M214.4 425.1h0M215.5 427.8h0M216.5 424.8h0M217.6 425.0h0M218.6 424.6h0M219.7 424.9h0M220.7 425.2h0M221.8 424.8h0M222.9 425.0h0M223.9 424.3h0M225.0 426.0h0M226.0 424.2h0M227.1 425.7h0M228.1 424.4h0M229.2 425.9h0M230.2 425.3h0M231.3 425.8h0M232.4 424.5h0M233.4 425.1h0M234.5 424.7h0M235.5 424.4h0M236.6 425.7h0M237.6 425.5h0M238.7 425.5h0M239.8 425.0h0M240.8 425.1h0M241.9 424.5h0M242.9 426.0h0M244.0 427.1h0M245.0 428.1h0M246.1 424.5h0M247.1 424.8h0M248.2 425.9h0M249.3 425.7h0M250.3 425.3h0M251.4 424.3h0M252.4 425.6h0M253.5 424.8h0M254.5 424.4h0M255.6 424.3h0M256.7 425.1h0M257.7 425.1h0M258.8 425.1h0M259.8 425.2h0M260.9 424.6h0M261.9 424.4h0M263.0 424.5h0M264.0 425.0h0M265.1 426.8h0M266.2 424.4h0M267.2 425.5h0M268.3 426.8h0M269.3 424.1h0M270.4 425.0h0M271.4 425.5h0M272.5 424.9h0M273.6 425.0h0M274.6 424.9h0M275.7 424.1h0M276.7 424.4h0M277.8 424.6h0M278.8 423.5h0M279.9 425.3h0M281.0 424.9h0M282.0 426.2h0M283.1 425.3h0M284.1 424.8h0M285.2 423.6h0M286.2 423.5h0M287.3 424.9h0M288.3 423.6h0M289.4 424.1h0M290.5 424.9h0M291.5 425.1h0M292.6 426.0h0M293.6 425.7h0M294.7 424.1h0M295.7 426.8h0M296.8 424.9h0M297.9 424.0h0M298.9 426.0h0M300.0 425.4h0M301.0 424.8h0M302.1 426.1h0M303.1 425.7h0M304.2 424.8h0M305.2 424.4h0M306.3 423.8h0M307.4 425.3h0M308.4 425.1h0M309.5 426.2h0M310.5 425.8h0M311.6 424.4h0M312.6 423.9h0M313.7 424.1h0M314.8 424.8h0M315.8 425.3h0M316.9 424.6h0M317.9 425.7h0M319.0 425.0h0M320.0 424.4h0M321.1 425.1h0M322.2 425.1h0M323.2 425.8h0M324.3 425.3h0M325.3 424.8h0M326.4 425.8h0M327.4 424.2h0M328.5 427.0h0M329.5 424.9h0M330.6 424.8h0M331.7 425.3h0M332.7 424.9h0M333.8 424.9h0M334.8 426.1h0M335.9 426.0h0M336.9 424.7h0M338.0 425.6h0M339.1 424.3h0M340.1 424.5h0M341.2 425.2h0M342.2 425.0h0M343.3 425.4h0M344.3 424.7h0M345.4 425.2h0M346.4 425.5h0M347.5 425.3h0M348.6 424.0h0M349.6 423.8h0M350.7 424.6h0M351.7 423.8h0M352.8 425.3h0M353.8 426.5h0M354.9 425.4h0M356.0 424.6h0M357.0 425.4h0M358.1 424.8h0M359.1 425.9h0M360.2 424.6h0M361.2 425.2h0M362.3 425.6h0M363.4 424.4h0M364.4 425.7h0M365.5 424.9h0M366.5 425.5h0M367.6 425.3h0M368.6 424.9h0M369.7 425.8h0M370.7 424.3h0M371.8 425.3h0M372.9 424.8h0M373.9 425.1h0M375.0 425.5h0M376.0 425.5h0M377.1 425.0h0M378.1 425.5h0M379.2 423.2h0M380.3 425.5h0M381.3 425.1h0M382.4 424.9h0M383.4 426.0h0M384.5 425.1h0M385.5 425.5h0M386.6 423.6h0M387.6 425.2h0M388.7 425.2h0M389.8 426.0h0M390.8 424.5h0M391.9 424.0h0M392.9 425.1h0M394.0 425.1h0M395.0 426.5h0M396.1 425.3h0M397.2 425.3h0M398.2 425.1h0M399.3 425.1h0M400.3 424.5h0M401.4 427.2h0M402.4 423.1h0M403.5 425.3h0M404.6 424.4h0M405.6 425.0h0M406.7 427.0h0M407.7 424.3h0M408.8 424.4h0M409.8 425.2h0M410.9 424.9h0M411.9 425.1h0M413.0 424.7h0M414.1 424.5h0M415.1 424.4h0M416.2 424.9h0M417.2 425.1h0M418.3 424.4h0M419.3 424.4h0M420.4 426.6h0M421.5 425.0h0M422.5 425.6h0M423.6 425.3h0M424.6 425.5h0M425.7 425.0h0M426.7 425.1h0M427.8 426.1h0M428.8 424.0h0M429.9 425.5h0M431.0 424.6h0M432.0 424.9h0M433.1 424.7h0M434.1 424.4h0M435.2 427.3h0M436.2 423.8h0M437.3 426.3h0M438.4 425.1h0M439.4 425.6h0M440.5 424.7h0M441.5 425.0h0M442.6 425.3h0M443.6 424.7h0M444.7 425.6h0M445.8 425.0h0M446.8 425.1h0M447.9 424.9h0M448.9 424.8h0M450.0 426.1h0M451.0 424.6h0M452.1 426.7h0M453.1 424.8h0M454.2 426.9h0M455.3 425.8h0M456.3 426.2h0M457.4 423.1h0M458.4 425.2h0M459.5 424.9h0M460.5 425.7h0M461.6 425.4h0M462.7 426.1h0M463.7 425.0h0M464.8 423.9h0M465.8 424.1h0M466.9 425.9h0M467.9 424.9h0M469.0 426.7h0M470.0 424.0h0M471.1 426.7h0M472.2 424.9h0M473.2 425.2h0M474.3 424.7h0M475.3 424.1h0M476.4 424.1h0M477.4 424.2h0M478.5 424.7h0M479.6 424.6h0M480.6 424.3h0M481.7 424.6h0M482.7 424.9h0M483.8 425.4h0M484.8 427.8h0M485.9 424.6h0M487.0 424.4h0M488.0 424.9h0M489.1 425.2h0M490.1 424.9h0M491.2 425.8h0M492.2 423.6h0M493.3 425.2h0M494.3 425.2h0M495.4 425.5h0M496.5 424.6h0M497.5 424.8h0M498.6 426.1h0M499.6 424.1h0M500.7 424.3h0M501.7 429.0h0M502.8 425.3h0M503.9 426.6h0M504.9 424.5h0M506.0 425.1h0M507.0 425.5h0M508.1 424.7h0M509.1 424.8h0M510.2 423.9h0M511.2 424.6h0M512.3 424.7h0M513.4 424.2h0M514.4 425.5h0M515.5 424.7h0M516.5 428.0h0M517.6 425.6h0M518.6 425.3h0M519.7 428.9h0M520.8 423.7h0M521.8 425.5h0M522.9 426.8h0M523.9 425.0h0M525.0 425.2h0M526.0 424.7h0M527.1 424.5h0M528.2 424.9h0M529.2 425.2h0M530.3 424.7h0M531.3 425.4h0M532.4 424.8h0M533.4 425.7h0M534.5 424.8h0M535.5 423.7h0M536.6 425.9h0M537.7 425.6h0M538.7 426.0h0M539.8 425.7h0M540.8 423.8h0M541.9 424.2h0M542.9 425.4h0M544.0 424.9h0M545.1 426.1h0M546.1 423.8h0M547.2 424.4h0M548.2 425.6h0M549.3 425.6h0M550.3 424.6h0M551.4 425.6h0M552.4 424.5h0M553.5 426.7h0M554.6 424.4h0M555.6 424.9h0M556.7 424.5h0M557.7 425.0h0M558.8 425.4h0M559.8 425.5h0M560.9 424.7h0M562.0 424.9h0M563.0 424.8h0M564.1 423.7h0M565.1 424.2h0M566.2 424.9h0M567.2 426.4h0M568.3 423.0h0M569.4 425.6h0M570.4 426.8h0M571.5 425.3h0M572.5 424.7h0M573.6 425.5h0M574.6 425.2h0M575.7 425.4h0M576.7 424.6h0M577.8 423.3h0M578.9 424.9h0M579.9 424.3h0M581.0 428.0h0M582.0 425.8h0M583.1 426.3h0M584.1 425.5h0M585.2 426.0h0M586.3 424.5h0M587.3 424.4h0M588.4 423.6h0M589.4 424.2h0M590.5 424.4h0M591.5 424.4h0M592.6 425.8h0M593.6 424.8h0M594.7 424.5h0M595.8 425.1h0M596.8 425.1h0M597.9 424.4h0M598.9 424.0h0M600.0 425.9h0M601.0 425.5h0M602.1 425.7h0M603.2 425.2h0M604.2 424.7h0M605.3 425.0h0M606.3 424.9h0M607.4 424.6h0M608.4 425.3h0M609.5 425.2h0M610.6 425.9h0M611.6 425.4h0M612.7 424.7h0M613.7 424.0h0M614.8 423.8h0M615.8 424.9h0M616.9 425.0h0M617.9 424.3h0M619.0 425.7h0M620.1 424.8h0M621.1 424.4h0M622.2 424.2h0M623.2 424.8h0M624.3 424.9h0M625.3 424.8h0M626.4 425.2h0M627.5 425.3h0M628.5 424.1h0M629.6 423.9h0M630.6 424.8h0M631.7 425.1h0M632.7 424.9h0M633.8 424.8h0M634.8 423.7h0M635.9 425.2h0M637.0 425.3h0M638.0 425.2h0M639.1 424.9h0M640.1 423.8h0M641.2 424.8h0M642.2 425.8h0M643.3 424.3h0M644.4 424.8h0M645.4 427.1h0M646.5 426.4h0M647.5 424.8h0M648.6 423.2h0M649.6 425.4h0M650.7 424.5h0M651.8 424.1h0M652.8 424.1h0M653.9 423.5h0M654.9 425.2h0M656.0 423.8h0M657.0 425.3h0M658.1 425.1h0M659.1 425.9h0M660.2 425.0h0M661.3 425.0h0M662.3 426.2h0M663.4 425.2h0M664.4 424.2h0M665.5 424.1h0M666.5 424.3h0M667.6 424.5h0M668.7 425.1h0M669.7 424.7h0M670.8 425.2h0M671.8 424.8h0M672.9 426.3h0M673.9 425.2h0M675.0 425.4h0M676.0 424.0h0M677.1 425.9h0M678.2 425.6h0M679.2 424.8h0M680.3 425.0h0M681.3 424.8h0M682.4 424.2h0M683.4 423.5h0M684.5 427.0h0M685.6 423.8h0M686.6 425.4h0M687.7 424.4h0M688.7 424.8h0M689.8 426.9h0M690.8 424.5h0M691.9 425.0h0M692.9 424.9h0M694.0 425.0h0M695.1 424.5h0M696.1 425.2h0M697.2 424.4h0M698.2 425.1h0M699.3 426.0h0M700.3 424.7h0M701.4 424.7h0M702.5 425.1h0M703.5 423.9h0M704.6 423.7h0M705.6 425.8h0M706.7 425.4h0M707.7 425.0h0M708.8 424.2h0M709.9 424.9h0M710.9 424.0h0M712.0 425.1h0M713.0 424.5h0M714.1 424.4h0M715.1 425.5h0M716.2 424.0h0M717.2 423.7h0M718.3 425.4h0M719.4 423.4h0M720.4 425.3h0M721.5 424.5h0M722.5 426.0h0M723.6 425.2h0M724.6 425.4h0M725.7 425.2h0M726.8 425.4h0M727.8 424.9h0M728.9 424.6h0M729.9 423.4h0M731.0 426.3h0M732.0 424.5h0M733.1 425.1h0M734.1 427.2h0M735.2 425.6h0M736.3 424.6h0M737.3 424.1h0M738.4 425.5h0M739.4 425.7h0M740.5 425.5h0M741.5 424.5h0M742.6 429.4h0M743.7 425.1h0M744.7 425.1h0M745.8 423.8h0M746.8 424.4h0M747.9 424.3h0M748.9 425.5h0M750.0 425.3h0M751.1 424.5h0M752.1 424.5h0M753.2 424.4h0M754.2 424.4h0M755.3 425.3h0M756.3 425.9h0M757.4 423.0h0M758.4 425.0h0M759.5 425.6h0M760.6 426.0h0M761.6 425.7h0M762.7 425.5h0M763.7 423.9h0M764.8 424.8h0M765.8 423.4h0M766.9 425.8h0M768.0 423.9h0M769.0 425.7h0M770.1 424.7h0M771.1 425.1h0M772.2 425.6h0M773.2 425.0h0M774.3 424.6h0M775.3 425.4h0M776.4 425.7h0M777.5 424.6h0M778.5 424.5h0M779.6 425.2h0M780.6 425.3h0M781.7 423.9h0M782.7 425.2h0M783.8 426.7h0M784.9 425.5h0M785.9 423.7h0M787.0 424.5h0M788.0 424.8h0M789.1 425.2h0M790.1 424.4h0M791.2 427.1h0M792.3 425.1h0M793.3 424.9h0M794.4 425.5h0M795.4 424.2h0M796.5 424.1h0M797.5 425.1h0M798.6 424.7h0M799.6 425.0h0M800.7 424.5h0M801.8 425.0h0M802.8 424.9h0M803.9 424.9h0M804.9 425.2h0M806.0 425.0h0M807.0 424.2h0M808.1 425.0h0M809.2 424.5h0M810.2 425.1h0M811.3 423.9h0M812.3 425.2h0M813.4 424.5h0M814.4 424.9h0M815.5 424.1h0M816.5 424.9h0M817.6 425.4h0M818.7 425.7h0M819.7 425.2h0M820.8 429.0h0M821.8 427.7h0M822.9 424.0h0M823.9 425.1h0M825.0 424.4h0M826.1 425.4h0M827.1 426.6h0M828.2 424.1h0M829.2 425.5h0M830.3 424.6h0M831.3 425.9h0M832.4 425.0h0M833.5 424.1h0M834.5 426.1h0M835.6 423.7h0M836.6 424.7h0M837.7 424.1h0M838.7 425.3h0M839.8 425.2h0M840.8 424.3h0M841.9 422.9h0M843.0 424.8h0M844.0 424.6h0M845.1 425.4h0M846.1 424.1h0M847.2 424.0h0M848.2 425.6h0M849.3 424.3h0M850.4 425.4h0M851.4 424.9h0M852.5 424.2h0M853.5 423.8h0M854.6 424.1h0M855.6 424.2h0M856.7 424.7h0M857.7 424.4h0M858.8 424.9h0M859.9 424.6h0M860.9 425.1h0M862.0 423.3h0M863.0 425.5h0M864.1 423.8h0M865.1 424.7h0M866.2 425.6h0" fill="none" stroke="#c23cb6" stroke-width="2.7" stroke-linecap="round"/>
</svg>
<div class="lbar"><span class="t" id="t83" style="left:396.80px;top:4.80px;font-size:8.5px;line-height:11.9px;font-weight:700;color:#fff6f7;letter-spacing:-0.255px;transform:scaleX(0.9985);transform-origin:0 50%;">label1</span></div>
<span class="t" id="t84" style="left:0.00px;top:-9.00px;font-size:8.6px;line-height:12.04px;font-weight:700;color:#111;left:5.4px;top:346.1px;width:20px;height:14px;line-height:14px;text-align:center;transform:rotate(-90deg);">FPS</span>
<span class="t" id="t85" style="left:0.00px;top:-9.63px;font-size:9.2px;line-height:12.88px;font-weight:700;color:#111;left:877.8px;top:328.4px;width:24px;height:14px;line-height:14px;text-align:center;transform:rotate(90deg);">Jank</span>
</section>
</main>
</body>
</html>
